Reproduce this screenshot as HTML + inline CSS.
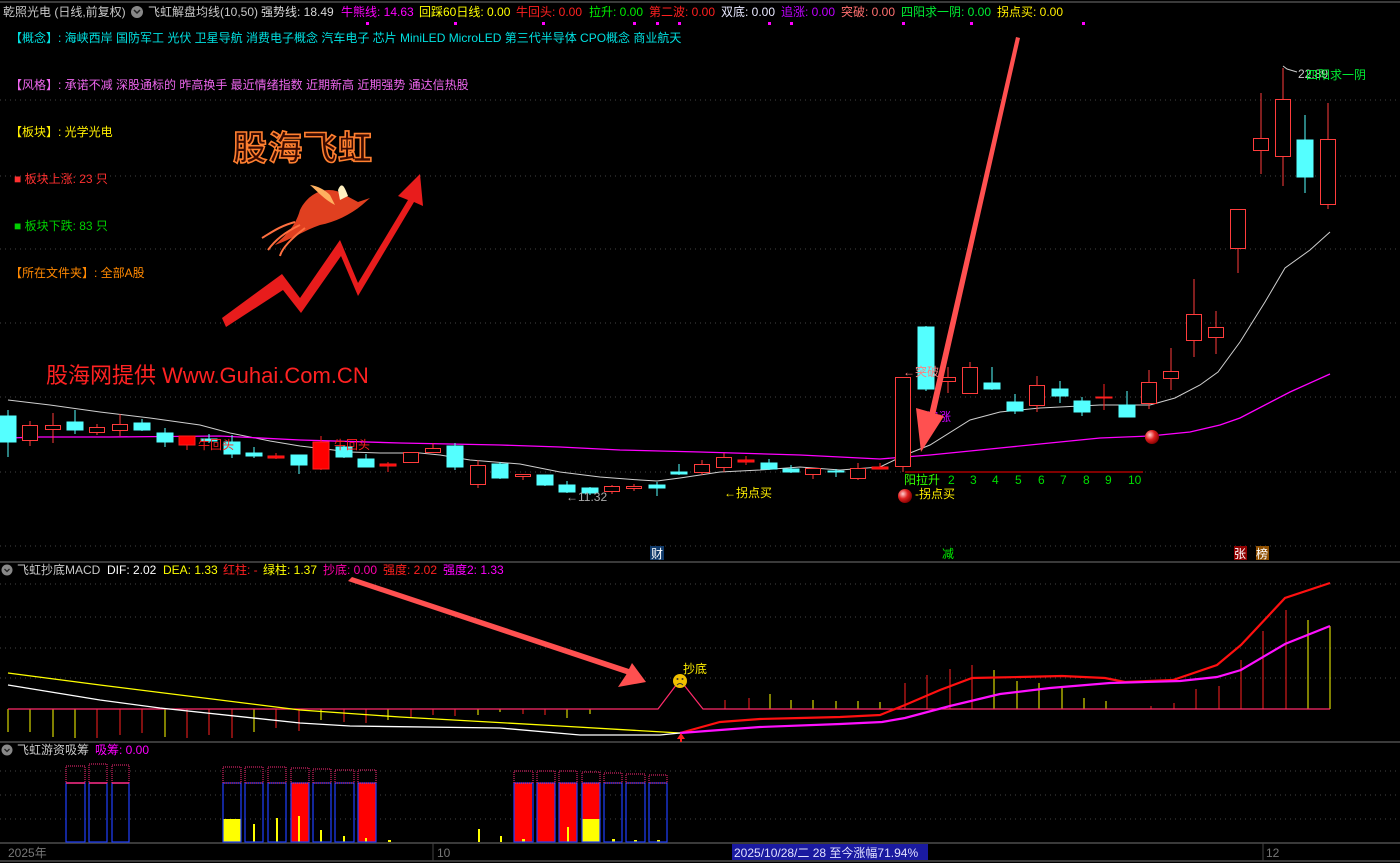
<!DOCTYPE html>
<html><head><meta charset="utf-8"><style>
html,body{margin:0;padding:0;background:#000;}
svg{display:block;font-family:"Liberation Sans","Noto Sans CJK SC",sans-serif;}
</style></head><body>
<svg width="1400" height="863" viewBox="0 0 1400 863" xmlns="http://www.w3.org/2000/svg">
<rect width="1400" height="863" fill="#000"/>
<!-- grid -->
<g stroke="#444" stroke-dasharray="1 4" stroke-width="1">
<line x1="0" y1="100" x2="1400" y2="100"/><line x1="0" y1="176" x2="1400" y2="176"/><line x1="0" y1="249" x2="1400" y2="249"/><line x1="0" y1="323" x2="1400" y2="323"/><line x1="0" y1="397" x2="1400" y2="397"/><line x1="0" y1="472" x2="1400" y2="472"/><line x1="0" y1="546" x2="1400" y2="546"/>
<line x1="0" y1="584" x2="1400" y2="584"/><line x1="0" y1="617" x2="1400" y2="617"/><line x1="0" y1="648" x2="1400" y2="648"/><line x1="0" y1="678" x2="1400" y2="678"/>
<line x1="0" y1="771" x2="1400" y2="771"/><line x1="0" y1="795" x2="1400" y2="795"/><line x1="0" y1="819" x2="1400" y2="819"/>
</g>
<g stroke="#3a3a3a" stroke-width="2">
<line x1="0" y1="2" x2="1400" y2="2"/><line x1="0" y1="562" x2="1400" y2="562"/><line x1="0" y1="742" x2="1400" y2="742"/><line x1="0" y1="843" x2="1400" y2="843"/><line x1="0" y1="861" x2="1400" y2="861"/>
</g>

<!-- header -->
<circle cx="137" cy="12" r="6" fill="#888"/><path d="M134 10 L137 13 L140 10" stroke="#222" stroke-width="1.5" fill="none"/>
<text y="16" font-size="12">
<tspan x="3" fill="#c8c8c8">乾照光电 (日线,前复权)</tspan>
<tspan x="148" fill="#c8c8c8">飞虹解盘均线(10,50)</tspan>
<tspan x="261" fill="#d8d8d8">强势线: 18.49</tspan>
<tspan x="341" fill="#ff00ff">牛熊线: 14.63</tspan>
<tspan x="419" fill="#ffff00">回踩60日线: 0.00</tspan>
<tspan x="516" fill="#ff2020">牛回头: 0.00</tspan>
<tspan x="589" fill="#00ee00">拉升: 0.00</tspan>
<tspan x="649" fill="#ff2020">第二波: 0.00</tspan>
<tspan x="721" fill="#e8e8ff">双底: 0.00</tspan>
<tspan x="781" fill="#c000ff">追涨: 0.00</tspan>
<tspan x="841" fill="#ff7070">突破: 0.00</tspan>
<tspan x="901" fill="#00ee33">四阳求一阴: 0.00</tspan>
<tspan x="997" fill="#ffee00">拐点买: 0.00</tspan>
</text>
<g fill="#ff00ff"><rect x="366" y="22" width="3" height="3"/><rect x="454" y="22" width="3" height="3"/><rect x="542" y="22" width="3" height="3"/><rect x="633" y="22" width="3" height="3"/><rect x="656" y="22" width="3" height="3"/><rect x="678" y="22" width="3" height="3"/><rect x="768" y="22" width="3" height="3"/><rect x="790" y="22" width="3" height="3"/><rect x="902" y="22" width="3" height="3"/><rect x="970" y="22" width="3" height="3"/><rect x="1082" y="22" width="3" height="3"/></g>

<!-- left info -->
<g font-size="12">
<text x="10" y="42" fill="#00e0e0">【概念】: 海峡西岸 国防军工 光伏 卫星导航 消费电子概念 汽车电子 芯片 MiniLED MicroLED 第三代半导体 CPO概念 商业航天</text>
<text x="10" y="89" fill="#ee66ee">【风格】: 承诺不减 深股通标的 昨高换手 最近情绪指数 近期新高 近期强势 通达信热股</text>
<text x="10" y="136" fill="#ffee00">【板块】: 光学光电</text>
<text x="14" y="183" fill="#ff3030">■ 板块上涨:  23 只</text>
<text x="14" y="230" fill="#00d000">■ 板块下跌:  83 只</text>
<text x="10" y="277" fill="#ff8800">【所在文件夹】: 全部A股</text>
</g>
<text x="46" y="383" font-size="22" fill="#ff2222">股海网提供 Www.Guhai.Com.CN</text>

<!-- logo -->
<text x="233" y="160" font-size="34" font-weight="bold" fill="#3a0a00" stroke="#ff8030" stroke-width="1.6" letter-spacing="1">股海飞虹</text>
<g>
<path d="M300 210 C310 190 330 185 345 195 L358 202 L370 198 L362 205 C350 215 335 222 320 225 C305 230 290 240 275 245 C285 235 295 228 300 210Z" fill="#e04020"/>
<path d="M310 185 C318 192 325 200 335 205 L330 195 C325 190 318 186 310 185Z" fill="#ffb060"/>
<path d="M338 190 C342 180 345 188 348 196 L340 200Z" fill="#fff0c0"/>
<path d="M300 225 C285 232 275 240 268 250 M305 228 C292 238 282 248 280 256 M295 222 C280 226 272 232 262 238" stroke="#ff7040" stroke-width="2" fill="none"/>
<path d="M222 318 L282 274 L300 298 L340 240 L358 283 L408 200 L398 196 L420 174 L423 206 L414 202 L358 296 L341 256 L301 313 L283 290 L226 327Z" fill="#e81c1c"/>
</g>

<!-- MA lines main -->
<polyline fill="none" stroke="#cfcfcf" stroke-width="1" points="8,400 50,405 100,412 150,418 200,425 230,433 270,441 300,446 350,452 380,453 420,453 440,455 470,460 520,464 560,472 600,477 640,480 657,481 680,478 720,472 760,470 800,467 840,470 880,467 905,455 930,445 970,420 1000,412 1040,408 1100,405 1150,405 1175,398 1200,385 1218,372 1240,342 1265,302 1285,268 1310,250 1330,232"/>
<polyline fill="none" stroke="#ff00ff" stroke-width="1.3" points="8,438 40,437 110,437 220,436 300,440 400,443 500,445 560,447 620,450 700,452 800,455 880,459 930,455 1000,448 1100,438 1150,436 1190,432 1220,425 1240,418 1290,392 1330,374"/>

<!-- candles -->
<g stroke-width="1">
<g stroke="#54ffff" fill="#54ffff">
<line x1="8" y1="410" x2="8" y2="457"/><rect x="0" y="416" width="16" height="26"/>
<line x1="75" y1="410" x2="75" y2="434"/><rect x="67" y="422" width="16" height="8"/>
<line x1="142" y1="419" x2="142" y2="431"/><rect x="134" y="423" width="16" height="7"/>
<line x1="165" y1="428" x2="165" y2="447"/><rect x="157" y="433" width="16" height="9"/>
<line x1="209" y1="434" x2="209" y2="443"/><rect x="201" y="439" width="16" height="2"/>
<line x1="232" y1="435" x2="232" y2="458"/><rect x="224" y="442" width="16" height="12"/>
<line x1="254" y1="447" x2="254" y2="458"/><rect x="246" y="453" width="16" height="3"/>
<line x1="299" y1="455" x2="299" y2="474"/><rect x="291" y="455" width="16" height="10"/>
<line x1="344" y1="445" x2="344" y2="458"/><rect x="336" y="447" width="16" height="10"/>
<line x1="366" y1="454" x2="366" y2="467"/><rect x="358" y="459" width="16" height="8"/>
<line x1="455" y1="443" x2="455" y2="470"/><rect x="447" y="446" width="16" height="21"/>
<line x1="500" y1="462" x2="500" y2="479"/><rect x="492" y="464" width="16" height="14"/>
<line x1="545" y1="475" x2="545" y2="486"/><rect x="537" y="475" width="16" height="10"/>
<line x1="567" y1="481" x2="567" y2="493"/><rect x="559" y="485" width="16" height="7"/>
<line x1="590" y1="487" x2="590" y2="495"/><rect x="582" y="488" width="16" height="5"/>
<line x1="657" y1="482" x2="657" y2="496"/><rect x="649" y="485" width="16" height="3"/>
<line x1="679" y1="464" x2="679" y2="475"/><rect x="671" y="472" width="16" height="2"/>
<line x1="769" y1="459" x2="769" y2="470"/><rect x="761" y="463" width="16" height="6"/>
<line x1="791" y1="465" x2="791" y2="473"/><rect x="783" y="469" width="16" height="3"/>
<line x1="836" y1="469" x2="836" y2="477"/><rect x="828" y="471" width="16" height="1"/>
<line x1="926" y1="326" x2="926" y2="391"/><rect x="918" y="327" width="16" height="62"/>
<line x1="992" y1="367" x2="992" y2="390"/><rect x="984" y="383" width="16" height="6"/>
<line x1="1015" y1="394" x2="1015" y2="414"/><rect x="1007" y="402" width="16" height="9"/>
<line x1="1060" y1="381" x2="1060" y2="403"/><rect x="1052" y="389" width="16" height="7"/>
<line x1="1082" y1="397" x2="1082" y2="416"/><rect x="1074" y="401" width="16" height="11"/>
<line x1="1127" y1="391" x2="1127" y2="417"/><rect x="1119" y="405" width="16" height="12"/>
<line x1="1305" y1="115" x2="1305" y2="193"/><rect x="1297" y="140" width="16" height="37"/>
</g>
<g stroke="#ff3c3c" fill="#000">
<line x1="30" y1="421" x2="30" y2="446"/><rect x="22.5" y="425.5" width="15" height="15"/>
<line x1="53" y1="413" x2="53" y2="443"/><rect x="45.5" y="425.5" width="15" height="4"/>
<line x1="97" y1="424" x2="97" y2="435"/><rect x="89.5" y="427.5" width="15" height="5"/>
<line x1="120" y1="414" x2="120" y2="436"/><rect x="112.5" y="424.5" width="15" height="6"/>
<line x1="411" y1="452" x2="411" y2="463"/><rect x="403.5" y="452.5" width="15" height="10"/>
<line x1="433" y1="443" x2="433" y2="453"/><rect x="425.5" y="448.5" width="15" height="4"/>
<line x1="478" y1="460" x2="478" y2="488"/><rect x="470.5" y="465.5" width="15" height="19"/>
<line x1="523" y1="474" x2="523" y2="480"/><rect x="515.5" y="474.5" width="15" height="2"/>
<line x1="612" y1="485" x2="612" y2="494"/><rect x="604.5" y="486.5" width="15" height="5"/>
<line x1="634" y1="484" x2="634" y2="491"/><rect x="626.5" y="486.5" width="15" height="2"/>
<line x1="702" y1="460" x2="702" y2="475"/><rect x="694.5" y="464.5" width="15" height="8"/>
<line x1="724" y1="453" x2="724" y2="472"/><rect x="716.5" y="457.5" width="15" height="10"/>
<line x1="813" y1="468" x2="813" y2="479"/><rect x="805.5" y="468.5" width="15" height="6"/>
<line x1="858" y1="463" x2="858" y2="480"/><rect x="850.5" y="468.5" width="15" height="10"/>
<line x1="903" y1="377" x2="903" y2="472"/><rect x="895.5" y="377.5" width="15" height="89"/>
<line x1="948" y1="367" x2="948" y2="393"/><rect x="940.5" y="377.5" width="15" height="4"/>
<line x1="970" y1="362" x2="970" y2="394"/><rect x="962.5" y="367.5" width="15" height="26"/>
<line x1="1037" y1="376" x2="1037" y2="412"/><rect x="1029.5" y="385.5" width="15" height="20"/>
<line x1="1149" y1="370" x2="1149" y2="409"/><rect x="1141.5" y="382.5" width="15" height="21"/>
<line x1="1171" y1="348" x2="1171" y2="390"/><rect x="1163.5" y="371.5" width="15" height="7"/>
<line x1="1194" y1="279" x2="1194" y2="357"/><rect x="1186.5" y="314.5" width="15" height="26"/>
<line x1="1216" y1="311" x2="1216" y2="354"/><rect x="1208.5" y="327.5" width="15" height="10"/>
<line x1="1238" y1="209" x2="1238" y2="273"/><rect x="1230.5" y="209.5" width="15" height="39"/>
<line x1="1261" y1="93" x2="1261" y2="174"/><rect x="1253.5" y="138.5" width="15" height="12"/>
<line x1="1283" y1="68" x2="1283" y2="186"/><rect x="1275.5" y="99.5" width="15" height="57"/>
<line x1="1328" y1="103" x2="1328" y2="209"/><rect x="1320.5" y="139.5" width="15" height="65"/>
</g>
<g stroke="#ff2020" fill="#ff0000">
<line x1="187" y1="436" x2="187" y2="450"/><rect x="179" y="436" width="16" height="9"/>
<line x1="276" y1="453" x2="276" y2="459"/><rect x="268" y="456" width="16" height="2"/>
<line x1="321" y1="436" x2="321" y2="470"/><rect x="313" y="442" width="16" height="27"/>
<line x1="388" y1="462" x2="388" y2="472"/><rect x="380" y="464" width="16" height="2"/>
<line x1="746" y1="456" x2="746" y2="465"/><rect x="738" y="460" width="16" height="2"/>
<line x1="880" y1="463" x2="880" y2="469"/><rect x="872" y="467" width="16" height="2"/>
<line x1="1104" y1="384" x2="1104" y2="410"/><rect x="1096" y="397" width="16" height="1"/>
</g>
</g>

<!-- main annotations -->
<g font-size="12">
<text x="198" y="449" fill="#ff2020">牛回头</text>
<text x="334" y="449" fill="#ff2020">牛回头</text>
<text x="566" y="501" fill="#aaaaaa">←11.32</text>
<text x="724" y="497" fill="#ffee00">←拐点买</text>
<text x="903" y="376" fill="#ff8080">←突破</text>
<text x="927" y="421" fill="#cc00ff">追涨</text>
<line x1="905" y1="472" x2="1143" y2="472" stroke="#ff0000" stroke-width="1"/>
<text x="904" y="484" fill="#33ff00">阳拉升</text>
<text y="484" fill="#00dd00"><tspan x="948">2</tspan><tspan x="970">3</tspan><tspan x="992">4</tspan><tspan x="1015">5</tspan><tspan x="1038">6</tspan><tspan x="1060">7</tspan><tspan x="1083">8</tspan><tspan x="1105">9</tspan><tspan x="1128">10</tspan></text>
<text x="915" y="498" fill="#ffee00">-拐点买</text>
<text x="1298" y="78" fill="#cccccc">22.89</text>
<text x="1306" y="79" fill="#00ee33">四阳求一阴</text>
</g>
<path d="M1283 66 l4 3 l10 3" stroke="#ccc" fill="none"/>
<defs><radialGradient id="ball" cx="35%" cy="35%" r="70%"><stop offset="0" stop-color="#ffd0d0"/><stop offset="0.5" stop-color="#e02020"/><stop offset="1" stop-color="#800000"/></radialGradient></defs>
<circle cx="905" cy="496" r="7" fill="url(#ball)"/>
<circle cx="1152" cy="437" r="7" fill="url(#ball)"/>
<rect x="650" y="546" width="14" height="14" fill="#103a6a"/><text x="651" y="558" font-size="12" fill="#fff">财</text>
<text x="942" y="558" font-size="12" fill="#00ee00">减</text>
<rect x="1234" y="546" width="13" height="14" fill="#900000"/><text x="1234" y="558" font-size="12" fill="#fff">张</text>
<rect x="1256" y="546" width="13" height="14" fill="#905000"/><text x="1256" y="558" font-size="12" fill="#fff">榜</text>

<!-- big arrow main -->
<g fill="#ff5050" stroke="none">
<polygon points="1016,37 1020,38 934,420 928,419"/>
<polygon points="921,452 916,408 930,412 944,416"/>
</g>

<!-- MACD panel -->
<circle cx="7" cy="570" r="5.5" fill="#888"/><path d="M4.5 569 L7 571.5 L9.5 569" stroke="#222" stroke-width="1.3" fill="none"/>
<text y="574" font-size="12">
<tspan x="17" fill="#c8c8c8">飞虹抄底MACD</tspan>
<tspan x="107" fill="#ffffff">DIF: 2.02</tspan>
<tspan x="163" fill="#ffff00">DEA: 1.33</tspan>
<tspan x="223" fill="#ff2020">红柱: -</tspan>
<tspan x="263" fill="#ffff00">绿柱: 1.37</tspan>
<tspan x="323" fill="#ff00aa">抄底: 0.00</tspan>
<tspan x="383" fill="#ff2020">强度: 2.02</tspan>
<tspan x="443" fill="#ff00ff">强度2: 1.33</tspan>
</text>
<g stroke-width="1">
<g stroke="#ffff00">
<line x1="8" y1="709" x2="8" y2="732"/><line x1="30" y1="709" x2="30" y2="732"/><line x1="53" y1="709" x2="53" y2="737"/><line x1="75" y1="709" x2="75" y2="738"/><line x1="165" y1="709" x2="165" y2="737"/><line x1="254" y1="709" x2="254" y2="732"/><line x1="321" y1="709" x2="321" y2="720"/><line x1="388" y1="709" x2="388" y2="720"/><line x1="478" y1="709" x2="478" y2="715"/><line x1="500" y1="709" x2="500" y2="712"/><line x1="567" y1="709" x2="567" y2="718"/><line x1="590" y1="709" x2="590" y2="714"/>
<line x1="770" y1="709" x2="770" y2="694"/><line x1="791" y1="709" x2="791" y2="700"/><line x1="813" y1="709" x2="813" y2="700"/><line x1="836" y1="709" x2="836" y2="701"/><line x1="858" y1="709" x2="858" y2="701"/><line x1="880" y1="709" x2="880" y2="702"/>
<line x1="994" y1="709" x2="994" y2="670"/><line x1="1017" y1="709" x2="1017" y2="681"/><line x1="1039" y1="709" x2="1039" y2="683"/><line x1="1062" y1="709" x2="1062" y2="688"/><line x1="1084" y1="709" x2="1084" y2="698"/><line x1="1106" y1="709" x2="1106" y2="701"/><line x1="1308" y1="709" x2="1308" y2="620"/><line x1="1330" y1="709" x2="1330" y2="626"/>
</g>
<g stroke="#ff2020">
<line x1="97" y1="709" x2="97" y2="738"/><line x1="120" y1="709" x2="120" y2="735"/><line x1="142" y1="709" x2="142" y2="733"/><line x1="187" y1="709" x2="187" y2="738"/><line x1="209" y1="709" x2="209" y2="735"/><line x1="232" y1="709" x2="232" y2="738"/><line x1="276" y1="709" x2="276" y2="728"/><line x1="299" y1="709" x2="299" y2="731"/><line x1="344" y1="709" x2="344" y2="722"/><line x1="366" y1="709" x2="366" y2="723"/><line x1="411" y1="709" x2="411" y2="717"/><line x1="433" y1="709" x2="433" y2="715"/><line x1="455" y1="709" x2="455" y2="716"/><line x1="523" y1="709" x2="523" y2="714"/><line x1="545" y1="709" x2="545" y2="715"/>
<line x1="725" y1="709" x2="725" y2="700"/><line x1="749" y1="709" x2="749" y2="698"/>
<line x1="905" y1="709" x2="905" y2="683"/><line x1="927" y1="709" x2="927" y2="675"/><line x1="950" y1="709" x2="950" y2="669"/><line x1="972" y1="709" x2="972" y2="665"/>
<line x1="1151" y1="709" x2="1151" y2="706"/><line x1="1174" y1="709" x2="1174" y2="703"/><line x1="1196" y1="709" x2="1196" y2="689"/><line x1="1219" y1="709" x2="1219" y2="686"/><line x1="1241" y1="709" x2="1241" y2="660"/><line x1="1263" y1="709" x2="1263" y2="631"/><line x1="1286" y1="709" x2="1286" y2="610"/>
</g>
</g>
<polyline fill="none" stroke="#ff2a6a" stroke-width="1.2" points="8,709 658,709 680,680 703,709 1330,709"/>
<polyline fill="none" stroke="#ffff00" stroke-width="1.3" points="8,673 100,685 260,705 300,710 400,717 560,726 680,733"/>
<polyline fill="none" stroke="#ffffff" stroke-width="1.3" points="8,685 100,700 160,708 300,723 350,726 500,728 580,735 660,735 680,733"/>
<polyline fill="none" stroke="#ff1010" stroke-width="2.2" points="680,733 720,722 760,719 800,718 840,717 880,715 905,705 940,690 972,678 1020,677 1062,676 1105,678 1125,682 1173,680 1217,665 1241,645 1285,598 1330,583"/>
<polyline fill="none" stroke="#ff10ff" stroke-width="2.2" points="680,733 760,727 840,724 882,722 905,718 950,706 1000,694 1050,688 1110,683 1180,681 1217,677 1241,670 1285,644 1330,626"/>
<polygon points="681,733 677,739 685,739" fill="#ff2020"/><rect x="680" y="738" width="2" height="4" fill="#ff2020"/>
<circle cx="680" cy="681" r="7" fill="#f0c000"/><circle cx="677.5" cy="679" r="1" fill="#333"/><circle cx="682.5" cy="679" r="1" fill="#333"/><path d="M677 685 Q680 682 683 685" stroke="#333" fill="none"/>
<text x="683" y="673" font-size="12" fill="#ffee00">抄底</text>
<g fill="#ff5050"><polygon points="348,581 352,577 632,670 629,675"/><polygon points="646,682 618,687 626,675 632,663"/></g>

<!-- volume panel -->
<circle cx="7" cy="750" r="5.5" fill="#888"/><path d="M4.5 749 L7 751.5 L9.5 749" stroke="#222" stroke-width="1.3" fill="none"/>
<text y="754" font-size="12"><tspan x="17" fill="#c8c8c8">飞虹游资吸筹</tspan><tspan x="95" fill="#ff00ff">吸筹: 0.00</tspan></text>
<g>
<g fill="#ff0000"><rect x="291" y="783" width="18" height="59"/><rect x="358" y="783" width="18" height="59"/><rect x="514" y="783" width="18" height="59"/><rect x="537" y="783" width="18" height="59"/><rect x="559" y="783" width="18" height="59"/><rect x="582" y="783" width="18" height="36"/></g>
<g fill="#ffff00"><rect x="223" y="819" width="18" height="23"/><rect x="582" y="819" width="18" height="23"/>
<rect x="253" y="824" width="2" height="18"/><rect x="276" y="818" width="2" height="24"/><rect x="298" y="816" width="2" height="26"/><rect x="320" y="830" width="2" height="12"/><rect x="343" y="836" width="2" height="6"/><rect x="365" y="838" width="2" height="4"/><rect x="388" y="840" width="3" height="2"/><rect x="478" y="829" width="2" height="13"/><rect x="500" y="836" width="2" height="6"/><rect x="522" y="839" width="3" height="3"/><rect x="567" y="827" width="2" height="15"/><rect x="612" y="839" width="3" height="3"/><rect x="634" y="840" width="3" height="2"/><rect x="657" y="840" width="3" height="2"/></g>
<g fill="none" stroke="#2040ff" stroke-width="1.2">
<rect x="66" y="783" width="19" height="59"/><rect x="89" y="783" width="18" height="59"/><rect x="112" y="783" width="17" height="59"/>
<rect x="223" y="783" width="18" height="59"/><rect x="245" y="783" width="18" height="59"/><rect x="268" y="783" width="18" height="59"/><rect x="291" y="783" width="18" height="59"/><rect x="313" y="783" width="18" height="59"/><rect x="335" y="783" width="19" height="59"/><rect x="358" y="783" width="18" height="59"/>
<rect x="514" y="783" width="19" height="59"/><rect x="537" y="783" width="18" height="59"/><rect x="559" y="783" width="18" height="59"/><rect x="582" y="783" width="18" height="59"/><rect x="604" y="783" width="18" height="59"/><rect x="626" y="783" width="19" height="59"/><rect x="649" y="783" width="18" height="59"/>
</g>
<g fill="none" stroke="#ff2a7a" stroke-width="1" stroke-dasharray="1 1">
<rect x="66" y="766" width="19" height="17"/><rect x="89" y="764" width="18" height="19"/><rect x="112" y="765" width="17" height="18"/>
<rect x="223" y="767" width="18" height="16"/><rect x="245" y="767" width="18" height="16"/><rect x="268" y="767" width="18" height="16"/><rect x="291" y="768" width="18" height="15"/><rect x="313" y="769" width="18" height="14"/><rect x="335" y="770" width="19" height="13"/><rect x="358" y="770" width="18" height="13"/>
<rect x="514" y="771" width="19" height="12"/><rect x="537" y="771" width="18" height="12"/><rect x="559" y="771" width="18" height="12"/><rect x="582" y="772" width="18" height="11"/><rect x="604" y="773" width="18" height="10"/><rect x="626" y="774" width="19" height="9"/><rect x="649" y="775" width="18" height="8"/>
</g>
<g stroke="#ff2a7a" stroke-width="1.5"><line x1="66" y1="783" x2="85" y2="783"/><line x1="89" y1="783" x2="107" y2="783"/><line x1="112" y1="783" x2="129" y2="783"/></g>
</g>

<!-- bottom axis -->
<text x="8" y="857" font-size="12" fill="#777">2025年</text>
<line x1="433" y1="843" x2="433" y2="861" stroke="#444"/>
<text x="437" y="857" font-size="12" fill="#777">10</text>
<rect x="732" y="844" width="196" height="16" fill="#1a1aa0"/>
<text x="734" y="857" font-size="12" fill="#e0e0ff">2025/10/28/二 28 至今涨幅71.94%</text>
<line x1="1263" y1="843" x2="1263" y2="861" stroke="#444"/>
<text x="1266" y="857" font-size="12" fill="#777">12</text>
</svg>
</body></html>
